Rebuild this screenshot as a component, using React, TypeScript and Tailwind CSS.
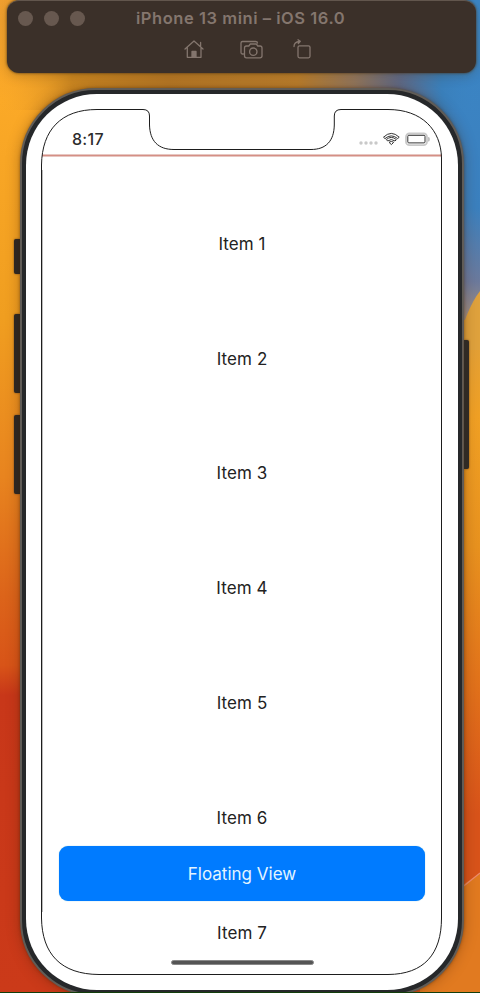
const items = [1, 2, 3, 4, 5, 6, 7];

function Wallpaper() {
  return (
    <svg className="absolute inset-0" width="480" height="993" viewBox="0 0 480 993" aria-hidden="true">
      <defs>
        <linearGradient id="left" x1="0" y1="0" x2="0" y2="1">
          <stop offset="0" stopColor="#f0a030" />
          <stop offset="0.1" stopColor="#fba927" />
          <stop offset="0.32" stopColor="#f09e20" />
          <stop offset="0.48" stopColor="#e8841f" />
          <stop offset="0.6" stopColor="#dc641a" />
          <stop offset="0.67" stopColor="#d85418" />
          <stop offset="0.7" stopColor="#c83719" />
          <stop offset="1" stopColor="#cb3a19" />
        </linearGradient>
        <linearGradient id="right" x1="0" y1="0" x2="0" y2="1">
          <stop offset="0" stopColor="#e2a03a" />
          <stop offset="0.3" stopColor="#dba042" />
          <stop offset="0.42" stopColor="#f0a024" />
          <stop offset="0.55" stopColor="#e8921f" />
          <stop offset="0.68" stopColor="#e2741b" />
          <stop offset="0.82" stopColor="#d8531a" />
          <stop offset="0.89" stopColor="#d8531a" />
        </linearGradient>
        <linearGradient id="strip" x1="0" y1="0" x2="1" y2="0">
          <stop offset="0" stopColor="#f5a52a" stopOpacity="0" />
          <stop offset="0.15" stopColor="#cf8a22" />
          <stop offset="0.35" stopColor="#bb7c27" />
          <stop offset="0.62" stopColor="#c0832e" />
          <stop offset="0.74" stopColor="#957b62" />
          <stop offset="0.83" stopColor="#626d8a" />
          <stop offset="0.92" stopColor="#3a7fba" />
          <stop offset="1" stopColor="#3b86c6" stopOpacity="0" />
        </linearGradient>
        <linearGradient id="blue" x1="0" y1="0" x2="0" y2="1">
          <stop offset="0" stopColor="#3b86c6" />
          <stop offset="0.65" stopColor="#3b80be" />
          <stop offset="0.88" stopColor="#6c7a9c" />
          <stop offset="1" stopColor="#a39080" />
        </linearGradient>
      </defs>
      <rect width="240" height="993" fill="url(#left)" />
      <rect x="240" width="240" height="993" fill="url(#right)" />
      <rect x="400" width="80" height="320" fill="url(#blue)" />
      <path d="M456 350Q466 309 480 291V350Z" fill="#dfa23d" />
      <rect width="480" height="110" fill="url(#strip)" />
      <path d="M420 915L480 873V993H420Z" fill="#e17a20" />
      <path d="M460 889L480 873" stroke="#ee8b70" strokeWidth="1.3" />
    </svg>
  );
}

function Toolbar() {
  return (
    <header className="relative ml-[7px] h-[73px] w-[469px] shrink-0 rounded-[12px] border-t border-[#62564d] bg-[#3b3029] text-[#84766e] shadow-[0_0_2px_1px_rgba(70,50,25,0.45),0_3px_12px_rgba(60,35,0,0.25)]">
      <div className="flex h-[34px] items-center gap-[51px] pl-[11px]">
        <div className="flex gap-[11px]">
          <span className="size-[15px] rounded-full bg-[#67584f]" />
          <span className="size-[15px] rounded-full bg-[#67584f]" />
          <span className="size-[15px] rounded-full bg-[#67584f]" />
        </div>
        <h1 className="whitespace-nowrap text-[16.5px] font-semibold leading-none tracking-[0.55px]">iPhone 13 mini – iOS 16.0</h1>
      </div>
      <div className="flex pl-[176px]">
        <svg width="22" height="28" viewBox="183 35 22 28" fill="none" stroke="currentColor" strokeWidth="1.3" strokeLinejoin="round" strokeLinecap="round">
          <path d="M185 49L194 41L203 49M187.3 47.5V57.3H201V47.5M200.6 46V42.5" />
          <path d="M192 57V51.5h4V57Z" fill="currentColor" />
        </svg>
        <svg className="ml-[34px]" width="26" height="28" viewBox="239 35 26 28" fill="none" stroke="currentColor" strokeWidth="1.3" strokeLinejoin="round" strokeLinecap="round">
          <path d="M243.5 54H242.3Q241 54 241 52.5V43Q241 41.5 242.5 41.5H255.5Q257.5 41.5 257.5 43" />
          <path d="M246.5 46h2.3l1.5-2h6l1.5 2h2.2q2 0 2 2v8q0 1.8-2 1.8h-13.5q-2 0-2-1.8v-8q0-2 2-2Z" />
          <circle cx="253.3" cy="51.7" r="3.7" />
        </svg>
        <svg className="ml-[26px]" width="24" height="28" viewBox="291 35 24 28" fill="none" stroke="currentColor" strokeWidth="1.3" strokeLinejoin="round" strokeLinecap="round">
          <rect x="298" y="45.8" width="12" height="12" rx="1.5" />
          <path d="M294 46.5Q294 42 299.5 41.5M298 39.8L300.3 41.4L298.3 43.5" />
        </svg>
      </div>
    </header>
  );
}

function ScreenOutline() {
  return (
    <svg className="pointer-events-none absolute inset-0" width="432" height="896" viewBox="26 94 432 896" fill="none">
      <path d="M42.5 170V912" stroke="#bbb" strokeWidth="1" />
      <path d="M41.5 165C42 130 61 109.5 97 109.5H143Q149.5 109.5 149.5 116V125C150 141 158 149.5 174 149.5H311C326 149.5 334 141 334.3 125V116Q334.3 109.5 341 109.5H388C422 109.5 441 130 441.5 158V918C441.5 954 424 974.3 388 974.5H99C61 974.3 42 954 41.5 918Z" stroke="#1d1d1d" strokeWidth="1" />
    </svg>
  );
}

function StatusIcons() {
  return (
    <svg width="72" height="18" viewBox="358 130 72 18" fill="none">
      <g fill="#c9c9c9">
        <circle cx="361" cy="143" r="1.7" />
        <circle cx="366" cy="143" r="1.7" />
        <circle cx="371" cy="143" r="1.7" />
        <circle cx="376" cy="143" r="1.7" />
      </g>
      <g stroke="#333" strokeWidth="1" strokeLinejoin="round">
        <path d="M383.5 137.2Q391.3 129.6 399.2 137.2L397.7 138.6Q391.3 133.2 385 138.6Z" />
        <path d="M386.3 139.6Q391.3 135.2 396.4 139.6L395 141Q391.3 138 387.7 141Z" />
        <path d="M389 142.3Q391.3 140.5 393.7 142.3L391.4 144.6Z" />
      </g>
      <rect x="406" y="133.5" width="21" height="11.6" rx="3.4" stroke="#c9c9c9" strokeWidth="1.8" />
      <rect x="407.8" y="135.3" width="17.2" height="7.6" rx="1" stroke="#333" />
      <path d="M428.7 137.3q1.3 2 0 4Z" fill="#aaa" stroke="#bbb" />
    </svg>
  );
}

function Phone() {
  return (
    <main className="relative h-[908px] w-[444px] shrink-0 rounded-[76px] border-[2px] border-[#605c57] bg-[#26282a] p-[4px] shadow-[0_0_3px_rgba(65,35,10,0.5),0_0_14px_rgba(70,30,0,0.35)]">
      <div className="relative h-[896px] overflow-hidden rounded-[71px] bg-white px-[16px] text-[#222]">
        <ScreenOutline />
        <div className="flex h-[60px] items-end justify-between pb-[6px] pl-[30px] pr-[12px]">
          <time className="text-[16px] font-medium leading-[18px] tracking-[0.3px] text-[#2c2c2c]">8:17</time>
          <StatusIcons />
        </div>
        <div className="h-[3px] border-y border-[#e7c6c1] bg-[#d58f85]" />
        <ul className="pt-[30px]">
          {items.map((n) => (
            <li key={n} className="flex h-[114.9px] items-center justify-center text-[17px] tracking-[0.08px]">
              Item {n}
            </li>
          ))}
        </ul>
        <div className="absolute inset-x-[33px] bottom-[25px] flex flex-col items-center gap-[59px]">
          <button className="h-[55px] w-full rounded-[9px] bg-[#007bff] pt-[2px] text-[17px] text-[#e3f4ff] shadow-[0_0_1px_#62b8d8]">
            Floating View
          </button>
          <span className="h-[5px] w-[143px] rounded-full border border-[#888] bg-[#555]" />
        </div>
      </div>
    </main>
  );
}

export default function App() {
  return (
    <div className="relative flex h-[993px] w-[480px] flex-col overflow-hidden bg-[#eda028] font-['Inter','Liberation_Sans',sans-serif]">
      <Wallpaper />
      <Toolbar />
      <div className="relative flex shrink-0 pl-[14px] pt-[15px]">
        <div className="flex w-[6px] flex-col pt-[151px]">
          <span className="h-[35px] rounded-l-[2px] bg-[#2c2825] shadow-[0_0_2px_#654522]" />
          <span className="mt-[40px] h-[79px] rounded-l-[2px] bg-[#2c2825] shadow-[0_0_2px_#654522]" />
          <span className="mt-[22px] h-[79px] rounded-l-[2px] bg-[#2c2825] shadow-[0_0_2px_#654522]" />
        </div>
        <Phone />
        <div className="w-[5px] pt-[252px]">
          <span className="relative block h-[129px] rounded-r-[2px] bg-[#302a24] shadow-[0_0_2px_#654522]" />
        </div>
      </div>
      <div className="absolute inset-x-0 bottom-0 h-px bg-[#123e0b]" />
    </div>
  );
}
